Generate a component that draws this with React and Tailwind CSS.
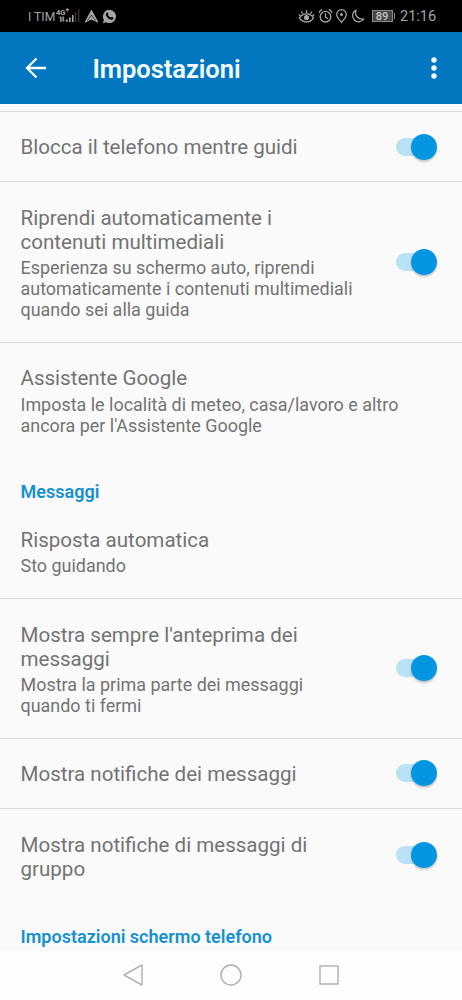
import React from "react";

function Switch() {
  return (
    <div className="flex h-[26px] w-[41px] shrink-0 items-center">
      <div className="h-[18px] w-[34px] shrink-0 rounded-full bg-[#b9e2f6]" />
      <div className="z-10 -ml-[19px] h-[26px] w-[26px] shrink-0 rounded-full bg-[#0696e1] shadow-[0_2px_2px_rgba(0,0,0,0.2)]" />
    </div>
  );
}

function Row({ title, summary = [], on = false, className, pad = "pt-[23.5px]", gap = "mt-[3px]" }) {
  return (
    <div className={`flex shrink-0 justify-between pr-[25px] pl-[20.5px] ${className}`}>
      <div className={`whitespace-nowrap text-[#737373] ${pad}`}>
        {title.map((t) => (
          <div key={t} className="text-[20.55px] leading-[24.4px]">{t}</div>
        ))}
        <div className={`text-[17.95px] leading-[21px] ${gap}`}>
          {summary.map((t) => (
            <div key={t}>{t}</div>
          ))}
        </div>
      </div>
      {on && (
        <div className="flex items-center self-stretch">
          <Switch />
        </div>
      )}
    </div>
  );
}

function Heading({ children, className }) {
  return (
    <div className={`shrink-0 pl-[20.5px] text-[18.03px] leading-[21px] font-semibold text-[#1691cf] ${className}`}>
      {children}
    </div>
  );
}

function StatusBar() {
  return (
    <div className="flex h-8 shrink-0 items-center bg-black pl-[28px] pr-[25px] text-[#a5a5a5]">
      <span className="mt-px w-[28px] text-[12.2px] leading-4 whitespace-nowrap">I TIM</span>
      <svg width="25" height="18" viewBox="0 0 25 18" fill="currentColor">
        <text x="0" y="7.5" fontSize="7.5" fontWeight="700">4G</text>
        <path d="M10.8 1h1v1.300h1.200v1h-1.200v1.300h-1v-1.300H9.600v-1h1.200z" />
        <path d="M5 9L3 11h1.200v4h1.400v-4zM7 15l2-2H7.800V9.500H6.400V13zM10 12.500h1.600V15H10zM13 10.500h1.600V15H13zM16 8h1.600v7H16z" />
        <path d="M19 5h1.300v10H19zM22 2h1.300v13H22z" opacity=".35" />
      </svg>
      <svg className="ml-[3px]" width="15" height="16" viewBox="0 0 15 16" fill="currentColor">
        <path d="M7.500 1.500L14.300 14l-1 .6-5.800-3.200-5.800 3.200-1-.6z" />
        <path d="M7.500 7l-4.300 6M7.500 7l4.300 6" stroke="#000" strokeWidth=".6" fill="none" />
      </svg>
      <svg className="ml-[3px]" width="15" height="15" viewBox="0 0 15 15">
        <path d="M7.500.8a6.600 6.600 0 1 1-3.200 12.400L.9 14.200l1-3.400A6.600 6.600 0 0 1 7.500.8z" fill="currentColor" />
        <path d="M4.800 3.700c.7-.5 1.100-.3 1.400.6.4.9.3 1.100-.3 1.800.7 1.200 1.600 2 2.900 2.500.8-.9.9-.9 2.200-.1.7.3.6.8.2 1.400-1 1.300-2.700.9-4.200 0C5.700 9.100 4.600 7.800 4 6.300c-.4-1-.1-2 .8-2.600z" fill="#000" />
      </svg>
      <svg className="ml-auto" width="17" height="17" viewBox="0 0 17 17" fill="none" stroke="currentColor" strokeWidth="1.300">
        <path d="M1.500 9.800C5 4.500 12 4.500 15.500 9.800 12 15.300 5 15.300 1.500 9.800zM8.500 5V2M4.500 5.800L3.200 3.500M12.500 5.800l1.300-2.300M2.400 8L.9 6.500M14.600 8l1.500-1.500" />
        <circle cx="8.500" cy="9.600" r="2.600" fill="currentColor" stroke="none" />
      </svg>
      <svg className="ml-[3px]" width="15" height="16" viewBox="0 0 15 16" fill="none" stroke="currentColor" strokeWidth="1.300" strokeLinecap="round">
        <circle cx="7.500" cy="8.700" r="5.300" />
        <path d="M7.500 5.700v3.200l2 1.500M1.200 4.400a5 5 0 0 1 2.600-2.700M13.800 4.400a5 5 0 0 0-2.600-2.700" />
      </svg>
      <svg className="ml-[2px]" width="13" height="16" viewBox="0 0 13 16" fill="none" stroke="currentColor" strokeWidth="1.300">
        <path d="M6.500 14.400C4.600 12 1.700 9.300 1.700 6.500a4.800 4.800 0 0 1 9.600 0c0 2.800-2.900 5.500-4.800 7.900z" />
        <circle cx="6.500" cy="6.500" r="1.500" fill="currentColor" stroke="none" />
      </svg>
      <svg className="ml-[3px]" width="14" height="16" viewBox="0 0 14 16" fill="none" stroke="currentColor" strokeWidth="1.300" strokeLinejoin="round">
        <path d="M5 2.200A6.100 6.100 0 1 0 12.800 11C7.500 12.200 3.200 7.500 5 2.200z" />
      </svg>
      <div className="ml-[7px] flex items-center">
        <div className="flex h-[12px] w-[21px] items-center justify-center border border-[#8b8b8b] bg-[#454545] text-[11px] leading-none font-medium text-[#c8c8c8]">89</div>
        <div className="ml-px h-[6px] w-[1.500px] bg-[#8b8b8b]" />
      </div>
      <span className="mt-px ml-[5px] w-[37px] text-[14.500px] leading-4 whitespace-nowrap">21:16</span>
    </div>
  );
}

export default function App() {
  return (
    <div className="flex h-[1000px] w-[462px] flex-col overflow-hidden bg-[#fafafa] font-['Roboto',sans-serif]">
      <StatusBar />
      <header className="flex h-[72px] shrink-0 items-center bg-[#0277bf] pr-[23px] pl-[25px] text-[#f4fcff]">
        <svg width="22" height="22" viewBox="0 0 22 22" fill="none" stroke="currentColor" strokeWidth="2.300">
          <path d="M21 11H2.500M11.500 1.500L2 11l9.500 9.500" />
        </svg>
        <h1 className="ml-[45.500px] pt-[2px] text-[25.600px] leading-[30px] font-semibold tracking-[-0.08px]">Impostazioni</h1>
        <svg className="ml-auto" width="10" height="22" viewBox="0 0 10 22" fill="currentColor">
          <circle cx="5" cy="3" r="2.700" />
          <circle cx="5" cy="11" r="2.700" />
          <circle cx="5" cy="19" r="2.700" />
        </svg>
      </header>
      <div className="h-[8px] shrink-0 border-b border-[#dcdcdc]" />
      <main className="flex h-[839px] shrink-0 flex-col overflow-hidden">
        <Row className="h-[70px] border-b border-[#dcdcdc]" pad="pt-[23px]" title={["Blocca il telefono mentre guidi"]} on />
        <Row
          className="h-[161px] border-b border-[#dcdcdc]"
          title={["Riprendi automaticamente i", "contenuti multimediali"]}
          summary={["Esperienza su schermo auto, riprendi", "automaticamente i contenuti multimediali", "quando sei alla guida"]}
          on
        />
        <Row
          className="h-[138px]"
          pad="pt-[23px]"
          gap="mt-[3.5px]"
          title={["Assistente Google"]}
          summary={["Imposta le località di meteo, casa/lavoro e altro", "ancora per l'Assistente Google"]}
        />
        <Heading className="h-[46px]">Messaggi</Heading>
        <Row
          className="h-[72px] border-b border-[#dcdcdc]"
          pad="pt-[0.5px]"
          title={["Risposta automatica"]}
          summary={["Sto guidando"]}
        />
        <Row
          className="h-[140px] border-b border-[#dcdcdc] *:last:pb-[2px]"
          title={["Mostra sempre l'anteprima dei", "messaggi"]}
          summary={["Mostra la prima parte dei messaggi", "quando ti fermi"]}
          on
        />
        <Row
          className="h-[70px] border-b border-[#dcdcdc] *:last:pb-[2px]"
          pad="pt-[23px]"
          title={["Mostra notifiche dei messaggi"]}
          on
        />
        <Row className="h-[93px] *:last:pb-[2px]" title={["Mostra notifiche di messaggi di", "gruppo"]} on />
        <Heading className="pt-[24px]">Impostazioni schermo telefono</Heading>
      </main>
      <nav className="flex h-[49px] shrink-0 items-center justify-center gap-[76px] bg-[#fdfdfd] pb-[2px] text-[#b2b2b2]">
        <svg width="22" height="22" viewBox="0 0 22 22" fill="none" stroke="currentColor" strokeWidth="1.500" strokeLinejoin="round">
          <path d="M20 1v20L2 11z" />
        </svg>
        <svg width="22" height="22" viewBox="0 0 22 22" fill="none" stroke="currentColor" strokeWidth="1.500">
          <circle cx="11" cy="11" r="10" />
        </svg>
        <svg width="22" height="22" viewBox="0 0 22 22" fill="none" stroke="currentColor" strokeWidth="1.500">
          <rect x="2" y="2" width="18" height="18" />
        </svg>
      </nav>
    </div>
  );
}
